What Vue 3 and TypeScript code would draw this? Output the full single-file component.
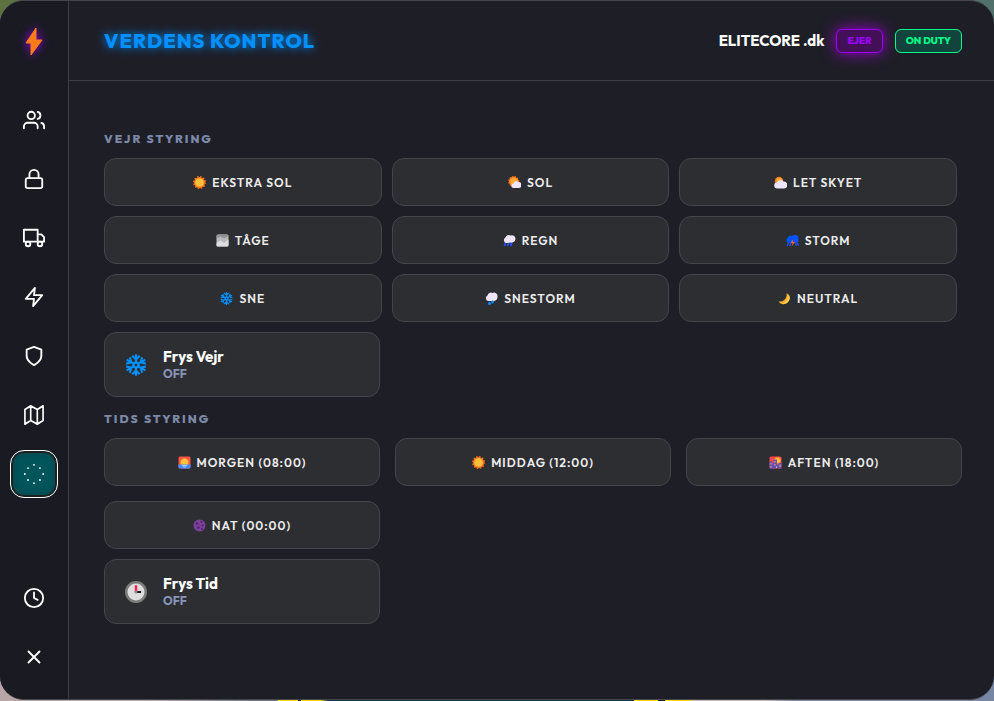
<script setup lang="ts">
import { ref } from 'vue'

interface Option {
  id: string
  icon: string
  label: string
}

const navItems: Option[] = [
  { id: 'players', icon: 'users', label: 'Spillere' },
  { id: 'lock', icon: 'lock', label: 'Lås' },
  { id: 'vehicles', icon: 'truck', label: 'Køretøjer' },
  { id: 'actions', icon: 'zap', label: 'Handlinger' },
  { id: 'safety', icon: 'shield', label: 'Sikkerhed' },
  { id: 'map', icon: 'map', label: 'Kort' },
  { id: 'world', icon: 'dots', label: 'Verden' },
]

const footerItems: Option[] = [
  { id: 'duty', icon: 'clock', label: 'Vagt' },
  { id: 'close', icon: 'close', label: 'Luk' },
]

const weatherOptions: Option[] = [
  { id: 'extrasunny', icon: 'sun', label: 'EKSTRA SOL' },
  { id: 'clear', icon: 'sun-cloud', label: 'SOL' },
  { id: 'clouds', icon: 'cloud-sun', label: 'LET SKYET' },
  { id: 'foggy', icon: 'fog', label: 'TÅGE' },
  { id: 'rain', icon: 'rain', label: 'REGN' },
  { id: 'thunder', icon: 'storm', label: 'STORM' },
  { id: 'snow', icon: 'snowflake', label: 'SNE' },
  { id: 'blizzard', icon: 'snow-cloud', label: 'SNESTORM' },
  { id: 'neutral', icon: 'moon', label: 'NEUTRAL' },
]

const timeOptions: Option[] = [
  { id: 'morning', icon: 'sunrise', label: 'MORGEN (08:00)' },
  { id: 'noon', icon: 'sun', label: 'MIDDAG (12:00)' },
  { id: 'evening', icon: 'city', label: 'AFTEN (18:00)' },
  { id: 'night', icon: 'new-moon', label: 'NAT (00:00)' },
]

const activeTab = ref('world')
const weatherFrozen = ref(false)
const timeFrozen = ref(false)
</script>

<template>
  <svg class="sprite" aria-hidden="true">
    <symbol id="i-users" viewBox="0 0 24 24">
      <path d="M16 21v-2a4 4 0 0 0-4-4H5a4 4 0 0 0-4 4v2M23 21v-2a4 4 0 0 0-3-3.87M16 3.13a4 4 0 0 1 0 7.75" />
      <circle cx="9" cy="7" r="4" />
    </symbol>
    <symbol id="i-lock" viewBox="0 0 24 24">
      <rect x="3" y="11" width="18" height="11" rx="2" />
      <path d="M7 11V7a5 5 0 0 1 10 0v4" />
    </symbol>
    <symbol id="i-truck" viewBox="0 0 24 24">
      <path d="M1 3h15v13H1zM16 8h4l3 3v5h-7z" />
      <circle cx="5.5" cy="18.500" r="2.500" />
      <circle cx="18.500" cy="18.500" r="2.500" />
    </symbol>
    <symbol id="i-zap" viewBox="0 0 24 24">
      <path d="M13 2 3 14h9l-1 8 10-12h-9z" />
    </symbol>
    <symbol id="i-shield" viewBox="0 0 24 24">
      <path d="M12 22s8-4 8-10V5l-8-3-8 3v7c0 6 8 10 8 10z" />
    </symbol>
    <symbol id="i-map" viewBox="0 0 24 24">
      <path d="M1 6v16l7-4 8 4 7-4V2l-7 4-8-4zM8 2v16M16 6v16" transform="translate(1.200 0) scale(.9 1)" />
    </symbol>
    <symbol id="i-dots" viewBox="0 0 24 24">
      <path d="M12 2v.01M12 22v.01M2 12h.01M22 12h.01M5.500 5.500h.01M18.500 18.500h.01M5.500 18.500h.01M18.500 5.500h.01" />
    </symbol>
    <symbol id="i-clock" viewBox="0 0 24 24">
      <circle cx="12" cy="12" r="10" />
      <path d="M12 6v6l4 2" />
    </symbol>
    <symbol id="i-close" viewBox="0 0 24 24">
      <path d="M18 6 6 18M6 6l12 12" />
    </symbol>

    <symbol id="i-sun" viewBox="0 0 26 26">
      <circle cx="13" cy="13" r="11" fill="#ff7417" />
      <circle cx="13" cy="13" r="11.500" fill="none" stroke="#ff7417" stroke-width="3" stroke-dasharray="3 3" />
      <circle cx="13" cy="13" r="8.500" fill="#ffc13c" />
    </symbol>
    <symbol id="i-sun-cloud" viewBox="0 0 26 26">
      <circle cx="11.500" cy="11" r="9.500" fill="#ff8b1b" stroke="#ff7417" stroke-width="3" stroke-dasharray="3 2" />
      <circle cx="12" cy="11" r="7" fill="#ffac3c" />
      <path d="M11 24a4.500 4.500 0 0 1 0-9 6 6 0 0 1 10-3 6 6 0 0 1 0 12z" fill="#eee5fb" />
    </symbol>
    <symbol id="i-cloud-sun" viewBox="0 0 26 26">
      <circle cx="10" cy="10" r="8.500" fill="#ff7c1b" />
      <circle cx="11" cy="10" r="6" fill="#ffb03c" />
      <path d="M7 25a6 6 0 0 1-1-12 8 8 0 0 1 13-2 7 7 0 0 1 1 14z" fill="#eee5fb" />
    </symbol>
    <symbol id="i-fog" viewBox="0 0 26 26">
      <rect x="1" y="1" width="24" height="24" rx="3" fill="#b9b9b9" />
      <path d="M1 4q0-3 3-3h18q3 0 3 3l-9 5L9 5 1 9z" fill="#929292" />
      <path d="m1 18 8-5 7 5 9-7v11q0 3-3 3H4q-3 0-3-3z" fill="#dedede" />
    </symbol>
    <symbol id="i-rain" viewBox="0 0 26 26">
      <path d="m6 16-3 8M12 16l-3 8M18 16l-3 8" fill="none" stroke="#2355ff" stroke-width="3.500" />
      <path d="M6 18a6 6 0 0 1-1-11 7 7 0 0 1 10-4 7 7 0 0 1 10 6 8 8 0 0 1-7 8z" fill="#eee5fb" />
    </symbol>
    <symbol id="i-storm" viewBox="0 0 26 26">
      <path d="m5 18-3 6M10 18l-3 6M18 17l3 7M22 17l3 6" fill="none" stroke="#2750e9" stroke-width="3" />
      <path d="M5 18a6 6 0 0 1-1-11 7 7 0 0 1 9-3 7 7 0 0 1 12 6 7 7 0 0 1-6 8z" fill="#0053ff" />
      <path d="m14 11-5 7h4l-2 7 7-9h-4z" fill="#ff5c20" />
    </symbol>
    <symbol id="i-snow-cloud" viewBox="0 0 26 26">
      <path d="M6 18a6 6 0 0 1-1-11 7 7 0 0 1 10-5 7 7 0 0 1 10 7 8 8 0 0 1-7 9z" fill="#eee5fb" />
      <circle cx="15" cy="20" r="3" fill="#008cff" />
      <circle cx="9" cy="23" r="3" fill="#008cff" />
    </symbol>
    <symbol id="i-snowflake" viewBox="0 0 26 26">
      <g fill="none" stroke="#0090ff" stroke-width="2.500" stroke-linecap="square">
        <g id="flake-arm">
          <path d="M13 10V1.500M9.500 3 13 6.500 16.500 3" />
        </g>
        <use href="#flake-arm" transform="rotate(60 13 13)" />
        <use href="#flake-arm" transform="rotate(120 13 13)" />
        <use href="#flake-arm" transform="rotate(180 13 13)" />
        <use href="#flake-arm" transform="rotate(240 13 13)" />
        <use href="#flake-arm" transform="rotate(300 13 13)" />
        <path d="m13 9.500 3 1.750v3.500l-3 1.750-3-1.750v-3.500z" />
      </g>
    </symbol>
    <symbol id="i-moon" viewBox="0 0 26 26">
      <path d="M17 2a12 12 0 1 1-16 17c10 1 18-6 16-17z" fill="#ffb32c" />
      <path d="M20 4a11 11 0 0 1-12 18c9 0 14-8 12-18z" fill="#ffd05a" />
    </symbol>
    <symbol id="i-sunrise" viewBox="0 0 26 26">
      <rect x="1" y="1" width="24" height="24" rx="3" fill="#ff5248" />
      <circle cx="13" cy="13" r="9" fill="#ff8b32" />
      <circle cx="13" cy="13" r="7" fill="#ffc53c" />
      <path d="M1 17h24v5q0 3-3 3H4q-3 0-3-3z" fill="#448cff" />
      <path d="M8 19h10M10 22h6" stroke="#a7caff" stroke-width="2" />
    </symbol>
    <symbol id="i-city" viewBox="0 0 26 26">
      <rect x="1" y="1" width="24" height="24" rx="3" fill="#f94747" />
      <circle cx="17" cy="9" r="7" fill="#ff8a30" />
      <circle cx="17" cy="9" r="5" fill="#ffc53c" />
      <path d="M1 25V11h5v3h3V7h7v10h3v-3h6v11z" fill="#6a50b5" />
      <path d="M4 14v3M4 20v3M12 10v3M12 16v3M15 21v3M22 17v5" stroke="#e6b96a" stroke-width="2" />
    </symbol>
    <symbol id="i-new-moon" viewBox="0 0 26 26">
      <circle cx="13" cy="13" r="12" fill="#7b409c" />
      <g fill="#54236f">
        <circle cx="8" cy="9" r="2.500" />
        <circle cx="17" cy="6" r="2" />
        <circle cx="19" cy="13" r="2" />
        <circle cx="11" cy="17" r="2.500" />
        <circle cx="18" cy="20" r="2" />
        <circle cx="12" cy="11" r="1" />
      </g>
    </symbol>
    <symbol id="i-clock-face" viewBox="0 0 26 26">
      <circle cx="13" cy="13" r="11.500" fill="#dedede" stroke="#7d7d7d" stroke-width="3" />
      <path d="M13 13h6" stroke="#161616" stroke-width="2.200" />
      <path d="M13 13V5" stroke="#ff2452" stroke-width="3" />
      <circle cx="13" cy="13" r="1.800" fill="#8c8c8c" />
    </symbol>
  </svg>

  <div class="panel">
    <aside class="sidebar">
      <svg class="logo" viewBox="0 0 20 30" aria-hidden="true">
        <path d="M12 1 2 16h5v12l11-15h-6z" fill="#ff7a18" stroke="#ff7a18" stroke-linejoin="round" />
      </svg>
      <nav class="nav">
        <button
          v-for="item in navItems"
          :key="item.id"
          type="button"
          class="nav-button"
          :class="{ active: activeTab === item.id }"
          :aria-label="item.label"
          @click="activeTab = item.id"
        >
          <svg class="line-icon"><use :href="'#i-' + item.icon" /></svg>
        </button>
      </nav>
      <div class="nav nav-footer">
        <button
          v-for="item in footerItems"
          :key="item.id"
          type="button"
          class="nav-button"
          :aria-label="item.label"
        >
          <svg class="line-icon"><use :href="'#i-' + item.icon" /></svg>
        </button>
      </div>
    </aside>

    <div class="main">
      <header class="header">
        <h1 class="title">VERDENS KONTROL</h1>
        <div class="account">
          <span class="name">ELITECORE .dk</span>
          <span class="badge owner">EJER</span>
          <span class="badge duty">ON DUTY</span>
        </div>
      </header>

      <main class="content">
        <h2 class="section-title">VEJR STYRING</h2>
        <div class="grid weather">
          <button v-for="o in weatherOptions" :key="o.id" type="button" class="option">
            <svg class="emoji"><use :href="'#i-' + o.icon" /></svg>
            <span>{{ o.label }}</span>
          </button>
        </div>
        <div class="grid toggles">
          <button type="button" class="toggle" :aria-pressed="weatherFrozen" @click="weatherFrozen = !weatherFrozen">
            <svg class="emoji large"><use href="#i-snowflake" /></svg>
            <span class="toggle-text">
              <span class="toggle-name">Frys Vejr</span>
              <span class="toggle-state">{{ weatherFrozen ? 'ON' : 'OFF' }}</span>
            </span>
          </button>
        </div>

        <h2 class="section-title">TIDS STYRING</h2>
        <div class="grid">
          <button v-for="o in timeOptions" :key="o.id" type="button" class="option">
            <svg class="emoji"><use :href="'#i-' + o.icon" /></svg>
            <span>{{ o.label }}</span>
          </button>
        </div>
        <div class="grid toggles">
          <button type="button" class="toggle" :aria-pressed="timeFrozen" @click="timeFrozen = !timeFrozen">
            <svg class="emoji large"><use href="#i-clock-face" /></svg>
            <span class="toggle-text">
              <span class="toggle-name">Frys Tid</span>
              <span class="toggle-state">{{ timeFrozen ? 'ON' : 'OFF' }}</span>
            </span>
          </button>
        </div>
      </main>
    </div>
  </div>
</template>

<style>
body {
  background:
    linear-gradient(90deg, #5d7040, #52706b) top / 100% 50% no-repeat,
    linear-gradient(
      90deg,
      #b8a5a5 0 15%,
      #737987 25% 28%,
      #f5d90a 28% 30%,
      #222630 30% 30.3%,
      #f5d90a 30.3% 32.2%,
      #12354a 33% 63.8%,
      #f5d90a 63.8% 66.2%,
      #222630 66.2% 66.9%,
      #f5d90a 66.9% 69.2%,
      #c6b6b2 70% 77%,
      #7787a3 80% 100%
    );
}
</style>

<style scoped>
.sprite {
  position: absolute;
  width: 0;
  height: 0;
}

.panel {
  display: flex;
  box-sizing: border-box;
  min-height: calc(100vh - 1px);
  overflow: hidden;
  border: solid #45464c;
  border-width: 1px 0;
  border-radius: 24px;
  background: #1e1e27;
  color: #fff;
  font-family: Outfit, Lato, sans-serif;
}

button {
  margin: 0;
  padding: 0;
  font: inherit;
  color: inherit;
  cursor: pointer;
}

.sidebar {
  display: flex;
  flex-direction: column;
  align-items: center;
  flex: none;
  box-sizing: border-box;
  width: 69px;
  padding: 26px 0 18px;
  border-right: 1px solid #3d3e45;
  background: #1a1a23;
}

.logo {
  width: 20px;
  height: 30px;
  margin-bottom: 39px;
  filter: drop-shadow(0 0 5px #9d00ff);
}

.nav {
  display: flex;
  flex-direction: column;
  gap: 11px;
}

.nav-footer {
  margin-top: auto;
}

.nav-button {
  display: grid;
  place-items: center;
  box-sizing: border-box;
  width: 48px;
  height: 48px;
  border: 0;
  border-radius: 14px;
  background: none;
}

.nav-button.active {
  border: 1px solid #fff;
  background: #00555b;
  box-shadow: inset 0 0 0 2px #202022, inset 0 0 10px #003f45;
}

.line-icon {
  width: 22px;
  height: 22px;
  fill: none;
  stroke: #fff;
  stroke-width: 2;
  stroke-linecap: round;
  stroke-linejoin: round;
}

.main {
  flex: 1;
  min-width: 0;
}

.header {
  display: flex;
  align-items: center;
  justify-content: space-between;
  box-sizing: border-box;
  height: 80px;
  padding: 0 32px 0 35px;
  border-bottom: 1px solid #3d3e43;
}

.title {
  margin: 0;
  color: #0090ff;
  font-size: 20px;
  font-weight: 800;
  line-height: 24px;
  letter-spacing: 1px;
  text-shadow: 0 0 10px #0090ff;
}

.account {
  display: flex;
  align-items: center;
  gap: 12px;
}

.name {
  font-size: 15px;
  font-weight: 700;
  line-height: 20px;
}

.badge {
  padding: 4px 10px;
  border: 1px solid;
  border-radius: 6px;
  font-size: 10px;
  font-weight: 800;
  line-height: 14px;
}

.owner {
  border-color: #9d00ff;
  background: #431057;
  color: #9d00ff;
  box-shadow: 0 0 15px #9d00d0;
}

.duty {
  border-color: #00ff88;
  background: #12443d;
  color: #00ff88;
}

.content {
  padding: 36px 32px 32px 35px;
}

.section-title {
  margin: 0 0 11px;
  padding-top: 14px;
  color: #7c89a8;
  font-size: 12px;
  font-weight: 800;
  line-height: 16px;
  letter-spacing: 2px;
}

.grid {
  display: grid;
  grid-template-columns: repeat(3, minmax(0, 1fr));
  gap: 15px;
}

.weather {
  gap: 10px;
  padding-right: 5px;
}

.toggles {
  margin-top: 10px;
}

.option,
.toggle {
  display: flex;
  align-items: center;
  box-sizing: border-box;
  padding-top: 1px;
  border: 1px solid #44454a;
  border-radius: 12px;
  background: #2d2e32;
}

.option {
  justify-content: center;
  gap: 6px;
  height: 48px;
  color: #ececec;
  font-size: 12px;
  font-weight: 600;
  line-height: 16px;
  letter-spacing: 1px;
}

.emoji {
  flex: none;
  width: 13px;
  height: 13px;
}

.emoji.large {
  width: 22px;
  height: 22px;
}

.toggle {
  gap: 16px;
  height: 65px;
  padding-left: 20px;
  text-align: left;
}

.toggle-text,
.toggle-name,
.toggle-state {
  display: block;
}

.toggle-name {
  font-size: 15px;
  font-weight: 700;
  line-height: 18px;
}

.toggle-state {
  color: #8795b8;
  font-size: 12px;
  font-weight: 700;
  line-height: 16px;
}
</style>
